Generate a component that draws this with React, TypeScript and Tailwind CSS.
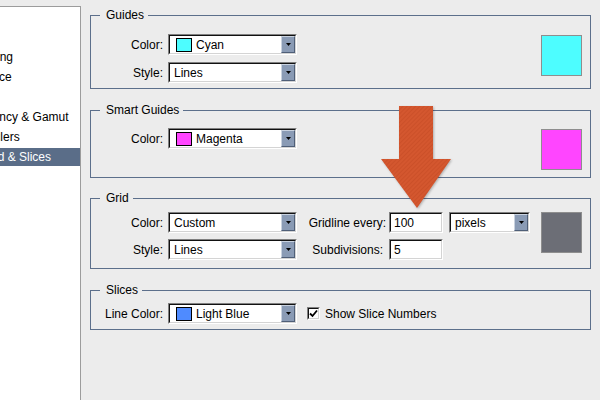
import type { ReactNode } from 'react';

// list is scrolled/clipped on the left in the screenshot, so each entry carries its offset
const prefs = [
  { name: 'General', off: -57 },
  { name: 'Interface', off: -57 },
  { name: 'File Handling', off: -57 },
  { name: 'Performance', off: -57 },
  { name: 'Cursors', off: -57 },
  { name: 'Transparency & Gamut', off: -55 },
  { name: 'Units & Rulers', off: -57 },
  { name: 'Guides, Grid & Slices', off: -63 },
  { name: 'Plug-Ins', off: -57 },
  { name: 'Type', off: -57 },
];

// classic windows sunken well (used by dropdowns, inputs, checkbox)
function Sunken({ className = '', children }: { className?: string; children?: ReactNode }) {
  return (
    <div className={`border border-t-[#808080] border-l-[#808080] border-b-white border-r-white ${className}`}>
      <div className="h-full border border-t-[#111] border-l-[#111] border-b-[#d4d4d4] border-r-[#d4d4d4] bg-white flex items-center">
        {children}
      </div>
    </div>
  );
}

function Dropdown({ label, swatch, width = 'w-[129px]' }: { label: string; swatch?: string; width?: string }) {
  return (
    <Sunken className={`${width} h-[21px]`}>
      {swatch ? (
        <div className="ml-[6px] w-[16px] h-[14px] border border-black" style={{ background: swatch }} />
      ) : null}
      <span className="ml-[4px] leading-none">{label}</span>
      <div className="ml-auto h-full w-[14px] bg-[#8a9bb5] border border-t-[#c9d2df] border-l-[#c9d2df] border-b-[#4f5f78] border-r-[#4f5f78] flex items-center justify-center">
        <svg width="5" height="3" viewBox="0 0 5 3">
          <polygon points="0,0 5,0 2.5,3" fill="#000" />
        </svg>
      </div>
    </Sunken>
  );
}

function TextField({ value }: { value: string }) {
  return (
    <Sunken className="w-[54px] h-[21px]">
      <span className="ml-[3px] leading-none">{value}</span>
    </Sunken>
  );
}

function Group({ title, className = '', children }: { title: string; className?: string; children: ReactNode }) {
  return (
    <fieldset className={`ml-[9px] w-[501px] border border-[#5c6f8b] ${className}`}>
      <legend className="ml-[9px] pl-[6px] pr-[4px] leading-[14px]">{title}</legend>
      {children}
    </fieldset>
  );
}

function Label({ children, w = 'w-[77px]', pr = 'pr-[5px]' }: { children: ReactNode; w?: string; pr?: string }) {
  return <div className={`${w} ${pr} text-right shrink-0 whitespace-nowrap`}>{children}</div>;
}

function Swatch({ color }: { color: string }) {
  return <div className="w-[41px] h-[41px] border border-[#8e8e8e] shrink-0" style={{ background: color }} />;
}

export default function App() {
  return (
    <div
      className="relative w-[600px] h-[400px] overflow-hidden bg-[#ececec] text-[12px] text-black flex"
      style={{ fontFamily: '"Liberation Sans", Arial, sans-serif' }}
    >
      {/* category list */}
      <div className="mt-[6px] w-[81px] h-[394px] bg-white border-t border-r border-[#9c9c9c] overflow-hidden shrink-0">
        {prefs.map((p) => {
          const sel = p.name === 'Guides, Grid & Slices';
          return (
            <div key={p.name} className="h-[20px] flex items-center">
              <div className={`h-[18px] w-full flex items-center ${sel ? 'bg-[#5a6d88] text-white' : ''}`}>
                <span className="whitespace-nowrap" style={{ marginLeft: p.off }}>
                  {p.name}
                </span>
              </div>
            </div>
          );
        })}
      </div>

      <div className="flex-1 pt-[8px]">
        <Group title="Guides" className="pt-[12px] pb-[5px]">
          <div className="flex items-start">
            <div className="flex flex-col gap-[7px]">
              <div className="flex items-center">
                <Label>Color:</Label>
                <Dropdown label="Cyan" swatch="#4dfdff" />
              </div>
              <div className="flex items-center">
                <Label>Style:</Label>
                <Dropdown label="Lines" />
              </div>
            </div>
            <div className="ml-auto mr-[8px] mt-[1px]">
              <Swatch color="#4dfdff" />
            </div>
          </div>
        </Group>

        <Group title="Smart Guides" className="mt-[14px] pt-[11px] pb-[7px]">
          <div className="flex items-start">
            <div className="flex items-center">
              <Label>Color:</Label>
              <Dropdown label="Magenta" swatch="#ff45ff" />
            </div>
            <div className="ml-auto mr-[8px] mt-[1px]">
              <Swatch color="#ff45ff" />
            </div>
          </div>
        </Group>

        <Group title="Grid" className="mt-[13px] pt-[7px] pb-[8px]">
          <div className="flex items-start">
            <div className="flex flex-col gap-[6px]">
              <div className="flex items-center">
                <Label>Color:</Label>
                <Dropdown label="Custom" />
                <Label w="w-[92px]" pr="pr-[3px]">Gridline every:</Label>
                <TextField value="100" />
                <div className="ml-[6px]">
                  <Dropdown label="pixels" width="w-[81px]" />
                </div>
              </div>
              <div className="flex items-center">
                <Label>Style:</Label>
                <Dropdown label="Lines" />
                <Label w="w-[92px]" pr="pr-[6px]">Subdivisions:</Label>
                <TextField value="5" />
              </div>
            </div>
            <div className="ml-auto mr-[8px]">
              <Swatch color="#6c6e76" />
            </div>
          </div>
        </Group>

        <Group title="Slices" className="mt-[14px] pt-[6px] pb-[5px]">
          <div className="flex items-center">
            <Label>Line Color:</Label>
            <Dropdown label="Light Blue" swatch="#4f8bff" />
            <Sunken className="ml-[10px] w-[13px] h-[13px]">
              <svg width="9" height="9" viewBox="0 0 9 9" className="mx-auto">
                <path d="M1 4.5 L3.5 7 L8 1.5" stroke="#000" strokeWidth="1.8" fill="none" />
              </svg>
            </Sunken>
            <span className="ml-[5px]">Show Slice Numbers</span>
          </div>
        </Group>
      </div>

      {/* annotation arrow */}
      <svg
        className="absolute left-[379px] top-[104px] drop-shadow-[1px_1px_1px_rgba(0,0,0,0.25)]"
        width="74"
        height="106"
        viewBox="0 0 74 106"
      >
        <defs>
          <pattern id="hatch" width="3" height="3" patternUnits="userSpaceOnUse" patternTransform="rotate(45)">
            <rect width="3" height="3" fill="#d4572f" />
            <rect width="1" height="3" fill="#cb5029" />
          </pattern>
        </defs>
        <polygon points="20,2 54,2 54,55 72,55 38,104 2,55 20,55" fill="url(#hatch)" />
      </svg>
    </div>
  );
}
